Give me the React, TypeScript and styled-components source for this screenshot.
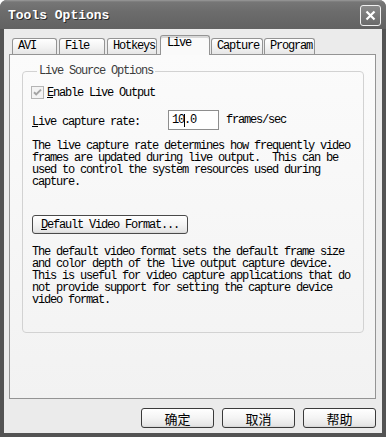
import React from "react";
import styled, { createGlobalStyle } from "styled-components";

const Global = createGlobalStyle`
  html, body { margin: 0; padding: 0; background: #ffffff; }
  * { box-sizing: border-box; }
`;

const mono = `"Liberation Mono", "Noto Sans CJK SC", monospace`;

const Frame = styled.div`
  width: 386px;
  height: 437px;
  background: #535353;
  border-radius: 7px 7px 0 0;
  display: flex;
  flex-direction: column;
  overflow: hidden;
  font-family: ${mono};
  font-size: 12px;
  letter-spacing: -1.2px;
  color: #000;
`;

const TitleBar = styled.div`
  height: 29px;
  flex: none;
  display: flex;
  align-items: center;
  justify-content: space-between;
  padding: 0 5px 0 8px;
  background: linear-gradient(#9a9a9a 0px, #767676 2px, #6c6c6c 40%, #626262 100%);
`;

const Title = styled.div`
  font-weight: bold;
  font-size: 13px;
  letter-spacing: 0px;
  color: #ffffff;
  text-shadow: 1px 1px 0 #2a2a2a;
  padding-top: 2px;
`;

const CloseBtn = styled.div`
  width: 21px;
  height: 21px;
  border: 1px solid #f0f0f0;
  border-radius: 3px;
  background: linear-gradient(#8a8a8a, #6a6a6a);
  display: flex;
  align-items: center;
  justify-content: center;
  margin-top: 2px;
`;

const Body = styled.div`
  flex: 1;
  margin: 0 4px 4px 4px;
  background: #ebebeb;
  display: flex;
  flex-direction: column;
  padding: 6px 6px 5px 5px;
`;

const TabStrip = styled.div`
  height: 19px;
  flex: none;
  display: flex;
  align-items: flex-end;
  position: relative;
  z-index: 1;
`;

const Tab = styled.div<{ $w: number; $ml: number; $active?: boolean }>`
  width: ${(p) => p.$w}px;
  margin-left: ${(p) => p.$ml}px;
  height: ${(p) => (p.$active ? 20 : 16)}px;
  margin-bottom: ${(p) => (p.$active ? -1 : 0)}px;
  border: 1px solid #949494;
  border-bottom: none;
  border-radius: 3px 3px 0 0;
  background: ${(p) =>
    p.$active ? "#fafafa" : "linear-gradient(#ffffff, #f1f1f1 60%, #e6e6e6)"};
  padding-left: ${(p) => (p.$active ? 6 : 5)}px;
  line-height: ${(p) => (p.$active ? 15 : 15)}px;
  white-space: pre;
  box-shadow: ${(p) => (p.$active ? "inset 0 2px 0 #d8d8d8" : "none")};
`;

const Panel = styled.div`
  height: 345px;
  flex: none;
  border: 1px solid #949494;
  background: linear-gradient(#fbfbfb, #f2f2f2);
  padding: 10px 11px 0 12px;
`;

const Group = styled.fieldset`
  margin: 0;
  padding: 0 10px 26px 9px;
  border: 1px solid #d2d2d2;
  border-radius: 4px;
  min-inline-size: 0;
  display: flex;
  flex-direction: column;
`;

const Legend = styled.legend`
  margin-left: 5px;
  padding: 0 2px;
  line-height: 12px;
  color: #3c3c3c;
`;

const CheckRow = styled.div`
  display: flex;
  align-items: center;
  height: 13px;
  margin-top: 9px;
  margin-left: -1px;
`;

const CheckText = styled.span`
  margin-left: 3px;
  line-height: 12px;
`;

const RateRow = styled.div`
  display: flex;
  align-items: center;
  height: 20px;
  margin-top: 11px;
`;

const RateLabel = styled.span`
  width: 136px;
  padding-top: 3px;
`;

const Input = styled.div`
  width: 51px;
  height: 20px;
  border: 1px solid #8e8e8e;
  background: #ffffff;
  padding-left: 3px;
  display: flex;
  align-items: center;
  white-space: pre;
`;

const Caret = styled.span`
  display: inline-block;
  width: 1px;
  height: 13px;
  background: #000;
  margin-right: -1px;
`;

const Units = styled.span`
  margin-left: 7px;
`;

const Para = styled.p<{ $mt: number }>`
  margin: ${(p) => p.$mt}px 0 0 0;
  line-height: 12px;
  white-space: pre;
`;

const Btn = styled.button<{ $w: number }>`
  width: ${(p) => p.$w}px;
  height: 20px;
  padding: 0;
  border: 1px solid #3a3a3a;
  border-radius: 3px;
  background: linear-gradient(#ffffff, #f4f4f4 50%, #e6e6e6 90%, #d4d4d4);
  font-family: ${mono};
  font-size: 12px;
  letter-spacing: -1.2px;
  color: #000;
  display: flex;
  align-items: center;
  justify-content: center;
  white-space: pre;
`;

const VideoBtn = styled(Btn)`
  margin-top: 27px;
  height: 19px;
  align-self: flex-start;
  border-color: #4a4a4a;
`;

const CjkBtn = styled(Btn)`
  font-family: "Noto Sans CJK SC", sans-serif;
  font-size: 13px;
  letter-spacing: 0;
  line-height: 1;
`;

const ButtonRow = styled.div`
  margin-top: 9px;
  display: flex;
  justify-content: flex-end;
  gap: 8px;
`;

const U = styled.span`
  text-decoration: underline;
  text-underline-offset: 1px;
`;

const CheckBox = () => (
  <svg width="13" height="13" viewBox="0 0 13 13">
    <rect x="0.5" y="0.5" width="12" height="12" fill="#f3f3f3" stroke="#b4b4b4" />
    <path d="M3 6.2 L5.2 8.4 L10 3.6" stroke="#a4a4a4" strokeWidth="2" fill="none" />
  </svg>
);

const CloseX = () => (
  <svg width="11" height="11" viewBox="0 0 11 11">
    <path d="M1.5 1.5 L9.5 9.5 M9.5 1.5 L1.5 9.5" stroke="#ffffff" strokeWidth="2.2" />
  </svg>
);

const tabs = [
  { label: "AVI", w: 45, ml: 3 },
  { label: "File", w: 46, ml: 2 },
  { label: "Hotkeys", w: 50, ml: 2 },
  { label: "Live", w: 50, ml: 3, active: true },
  { label: "Capture", w: 52, ml: 1 },
  { label: "Program", w: 51, ml: 1 },
];

export default function App() {
  return (
    <>
      <Global />
      <Frame>
        <TitleBar>
          <Title>Tools Options</Title>
          <CloseBtn>
            <CloseX />
          </CloseBtn>
        </TitleBar>
        <Body>
          <TabStrip>
            {tabs.map((t) => (
              <Tab key={t.label} $w={t.w} $ml={t.ml} $active={t.active}>
                {t.label}
              </Tab>
            ))}
          </TabStrip>
          <Panel>
            <Group>
              <Legend>Live Source Options</Legend>
              <CheckRow>
                <CheckBox />
                <CheckText>
                  <U>E</U>nable Live Output
                </CheckText>
              </CheckRow>
              <RateRow>
                <RateLabel>
                  <U>L</U>ive capture rate:
                </RateLabel>
                <Input>
                  10<Caret />.0
                </Input>
                <Units>frames/sec</Units>
              </RateRow>
              <Para $mt={10}>
                {"The live capture rate determines how frequently video\nframes are updated during live output.  This can be\nused to control the system resources used during\ncapture."}
              </Para>
              <VideoBtn $w={156}>
                <U>D</U>efault Video Format...
              </VideoBtn>
              <Para $mt={12}>
                {"The default video format sets the default frame size\nand color depth of the live output capture device.\nThis is useful for video capture applications that do\nnot provide support for setting the capture device\nvideo format."}
              </Para>
            </Group>
          </Panel>
          <ButtonRow>
            <CjkBtn $w={73}>确定</CjkBtn>
            <CjkBtn $w={73}>取消</CjkBtn>
            <CjkBtn $w={73}>帮助</CjkBtn>
          </ButtonRow>
        </Body>
      </Frame>
    </>
  );
}
